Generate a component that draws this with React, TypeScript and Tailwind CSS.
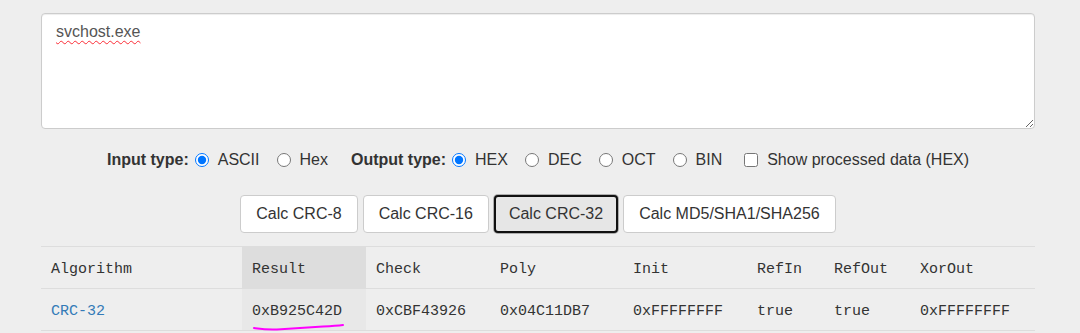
import { useState } from "react";

const columns = [
	{ key: "algorithm", label: "Algorithm", width: "w-[201px]" },
	{ key: "result", label: "Result", width: "w-[124px]" },
	{ key: "check", label: "Check", width: "w-[124px]" },
	{ key: "poly", label: "Poly", width: "w-[133px]" },
	{ key: "init", label: "Init", width: "w-[124px]" },
	{ key: "refIn", label: "RefIn", width: "w-[77px]" },
	{ key: "refOut", label: "RefOut", width: "w-[86px]" },
	{ key: "xorOut", label: "XorOut", width: "w-[125px]" },
];

const row: Record<string, string> = {
	algorithm: "CRC-32",
	result: "0xB925C42D",
	check: "0xCBF43926",
	poly: "0x04C11DB7",
	init: "0xFFFFFFFF",
	refIn: "true",
	refOut: "true",
	xorOut: "0xFFFFFFFF",
};

const buttons = ["Calc CRC-8", "Calc CRC-16", "Calc CRC-32", "Calc MD5/SHA1/SHA256"];

function Radio({
	name,
	label,
	checked,
	onChange,
}: {
	name: string;
	label: string;
	checked: boolean;
	onChange: () => void;
}) {
	return (
		<label className="flex items-center gap-[9px]">
			<input
				type="radio"
				name={name}
				checked={checked}
				onChange={onChange}
				className="m-0 h-[14px] w-[14px] accent-[#0075ff]"
			/>
			<span>{label}</span>
		</label>
	);
}

export default function App() {
	const [input, setInput] = useState("ASCII");
	const [output, setOutput] = useState("HEX");
	const [active, setActive] = useState("Calc CRC-32");

	return (
		<div
			className="min-h-[333px] bg-[#eeeeee] pt-[13px] text-[16px] text-[#333333]"
			style={{ fontFamily: '"Liberation Sans", Arial, sans-serif' }}
		>
			<div className="ml-[41px] w-[994px]">
				<div className="h-[116px] resize-y overflow-auto rounded-[4px] border border-[#cccccc] bg-white px-[14px] pt-[6px] text-[#555555] shadow-[inset_0_1px_1px_rgba(0,0,0,0.075)]">
					<span className="underline decoration-red-500 decoration-wavy decoration-1 underline-offset-[3px]">
						svchost.exe
					</span>
				</div>

				<div className="mt-[19px] flex h-[24px] items-center justify-center">
					<span className="mr-[6px] font-bold">Input type:</span>
					<div className="flex items-center gap-[17px]">
						{["ASCII", "Hex"].map((v) => (
							<Radio
								key={v}
								name="input"
								label={v}
								checked={input === v}
								onChange={() => setInput(v)}
							/>
						))}
					</div>
					<span className="ml-[23px] mr-[6px] font-bold">Output type:</span>
					<div className="flex items-center gap-[17px]">
						{["HEX", "DEC", "OCT", "BIN"].map((v) => (
							<Radio
								key={v}
								name="output"
								label={v}
								checked={output === v}
								onChange={() => setOutput(v)}
							/>
						))}
						<label className="ml-[5px] flex items-center gap-[9px]">
							<input type="checkbox" className="m-0 h-[14px] w-[14px]" />
							<span>Show processed data (HEX)</span>
						</label>
					</div>
				</div>

				<div className="mt-[23px] flex justify-center gap-[5px]">
					{buttons.map((b) => (
						<button
							key={b}
							onClick={() => setActive(b)}
							className={
								active === b
									? "h-[38px] rounded-[4px] border-2 border-[#111111] bg-[#e6e6e6] px-[13px] leading-6 text-[#333333] ring-1 ring-[#adadad]"
									: "h-[38px] rounded-[4px] border border-[#cccccc] bg-white px-[15px] leading-6 text-[#333333]"
							}
						>
							{b}
						</button>
					))}
				</div>

				<table
					className="mt-[13px] w-[994px] table-fixed border-collapse text-[15px] text-[#333333]"
					style={{ fontFamily: '"Liberation Mono", "Courier New", monospace' }}
				>
					<thead>
						<tr className="h-[42px] border-y border-[#dddddd]">
							{columns.map((c) => (
								<th
									key={c.key}
									className={`${c.width} px-[10px] pt-[5px] text-left font-normal ${
										c.key === "result" ? "bg-[#dddddd]" : ""
									}`}
								>
									{c.label}
								</th>
							))}
						</tr>
					</thead>
					<tbody>
						<tr className="h-[42px] border-b border-[#dddddd]">
							{columns.map((c) => (
								<td
									key={c.key}
									className={`px-[10px] pt-[5px] ${
										c.key === "result" ? "relative bg-[#e8e8e8]" : ""
									} ${c.key === "algorithm" ? "text-[#337ab7]" : ""}`}
								>
									{row[c.key]}
									{c.key === "result" && (
										<svg
											className="absolute left-[11px] top-[34px]"
											width="92"
											height="10"
											viewBox="0 0 92 10"
										>
											<path
												d="M1 5 C 8 6, 14 7, 24 6.5 C 40 5.5, 55 4.5, 70 3.5 C 80 3, 86 2.5, 90 2"
												fill="none"
												stroke="#ff00ff"
												strokeWidth="2"
												strokeLinecap="round"
											/>
										</svg>
									)}
								</td>
							))}
						</tr>
					</tbody>
				</table>
			</div>
		</div>
	);
}
